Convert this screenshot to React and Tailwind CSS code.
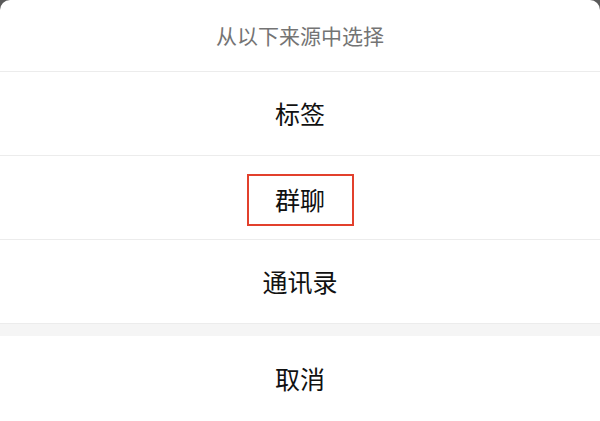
import React from 'react';

const options = ['标签', '群聊', '通讯录'];

const App = () => {
    return (
        <div
            className="w-[600px] h-[421px] bg-[#5a5a5a] overflow-hidden"
            style={{ fontFamily: '"Noto Sans CJK SC", "Noto Sans", sans-serif' }}
        >
            <div className="bg-white rounded-t-[10px] h-full flex flex-col">
                {/* Title */}
                <div className="h-[72px] flex items-center justify-center border-b border-[#ececec] text-[21px] text-[#747474]">
                    从以下来源中选择
                </div>

                {/* Options */}
                {options.map((label) => (
                    <div
                        key={label}
                        className="h-[84px] flex items-center justify-center border-b border-[#ececec] text-[25px] text-[#111111]"
                    >
                        {label === '群聊' ? (
                            <span className="w-[107px] h-[52px] mt-[5px] flex items-center justify-center border-2 border-[#e2402c]">
                                {label}
                            </span>
                        ) : (
                            label
                        )}
                    </div>
                ))}

                {/* Gap */}
                <div className="h-[12px] bg-[#f5f5f5]" />

                {/* Cancel */}
                <div className="flex-1 flex items-center justify-center text-[25px] text-[#111111]">
                    取消
                </div>
            </div>
        </div>
    );
};

export default App;
